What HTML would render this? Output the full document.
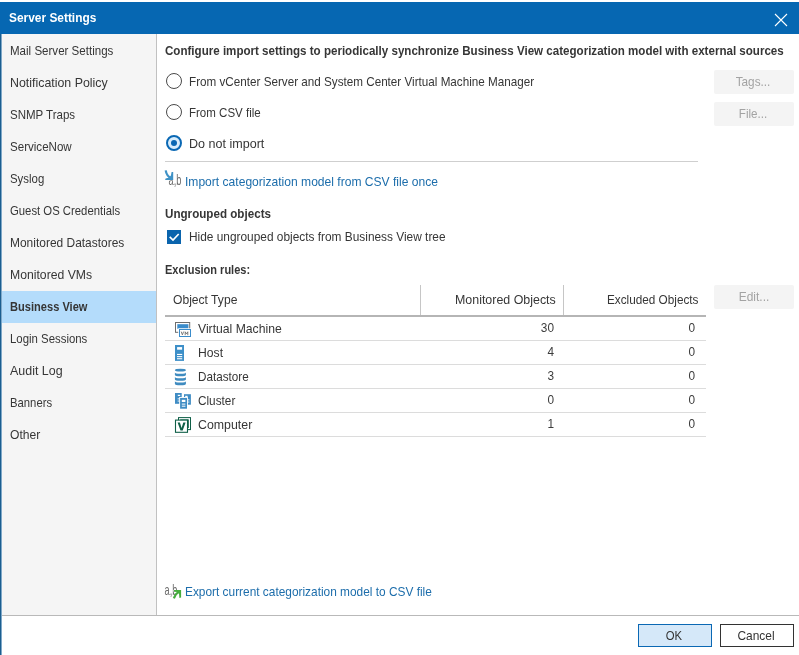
<!DOCTYPE html>
<html>
<head>
<meta charset="utf-8">
<title>Server Settings</title>
<style>
html,body{margin:0;padding:0;}
body{width:799px;height:655px;overflow:hidden;background:#fff;position:relative;
  font-family:"Liberation Sans",sans-serif;font-size:12.8px;color:#3c3c3c;}
.abs{position:absolute;}
svg{will-change:transform;}
.t{position:absolute;white-space:nowrap;line-height:16px;font-size:12.8px;transform-origin:0 0;}
.t.r{text-align:right;transform-origin:100% 0;}
.t.c{text-align:center;transform-origin:50% 0;}
.b{font-weight:bold;}
#titlebar{left:0;top:2px;width:799px;height:32px;background:#0667b2;}
#lborder{left:0;top:34px;width:2px;height:621px;background:linear-gradient(90deg,#1b5e90 0,#1b5e90 1px,#7fa8c8 1px,#7fa8c8 2px);}
#sidebar{left:2px;top:34px;width:154px;height:581px;background:#f5f5f5;}
#sideline{left:156px;top:34px;width:1px;height:581px;background:#c1c1c1;}
#sel{left:2px;top:291px;width:154px;height:32px;background:#b4dcfb;}
#botline{left:2px;top:615px;width:797px;height:1px;background:#b9b9b9;}
.dis{position:absolute;width:80px;height:24px;background:#f4f4f4;border-radius:2px;}
.radio{position:absolute;width:14px;height:14px;border:1px solid #4a4a4a;border-radius:50%;background:#fff;}
.hl{position:absolute;left:165px;width:541px;height:1px;background:#dcdcdc;}
</style>
</head>
<body>
<div class="abs" id="titlebar"></div>
<svg class="abs" id="closex" style="left:774px;top:13px" width="14" height="14" viewBox="0 0 14 14"><path d="M1 1 L13 13 M13 1 L1 13" stroke="#fff" stroke-width="1.1" fill="none"/></svg>
<div class="abs" id="lborder"></div>
<div class="abs" id="sidebar"></div>
<div class="abs" id="sideline"></div>
<div class="abs" id="sel"></div>
<div class="abs" id="botline"></div>

<div class="radio" style="left:166px;top:73px"></div>
<div class="radio" style="left:166px;top:104px"></div>
<div class="radio" id="rsel" style="left:166px;top:135px;border:2px solid #0a68b4;width:12px;height:12px;background:#d9edfc;"></div>
<div class="abs" style="left:171px;top:140px;width:6px;height:6px;border-radius:50%;background:#0a68b4;"></div>

<div class="dis" id="btags" style="left:714px;top:70px"></div>
<div class="dis" id="bfile" style="left:714px;top:102px"></div>
<div class="dis" id="bedit" style="left:714px;top:285px"></div>

<div class="abs" id="sep1" style="left:165px;top:161px;width:533px;height:1px;background:#cfcfcf;"></div>

<div class="abs" id="cb" style="left:167px;top:230px;width:14px;height:14px;background:#0a64ad;"></div>
<svg class="abs" style="left:167px;top:230px" width="14" height="14" viewBox="0 0 14 14"><path d="M2.7 6.9 L6.0 10.0 L11.7 4.0" stroke="#fff" stroke-width="1.7" fill="none"/></svg>

<div class="abs" style="left:420px;top:285px;width:1px;height:31px;background:#c6c6c6;"></div>
<div class="abs" style="left:563px;top:285px;width:1px;height:31px;background:#c6c6c6;"></div>
<div class="abs" id="hline" style="left:165px;top:315px;width:541px;height:2px;background:#b5b5b5;"></div>
<div class="hl" style="top:340px"></div>
<div class="hl" style="top:364px"></div>
<div class="hl" style="top:388px"></div>
<div class="hl" style="top:412px"></div>
<div class="hl" style="top:436px"></div>

<div class="abs" id="ok" style="left:638px;top:624px;width:72px;height:21px;border:1px solid #0a68b4;background:#d5e8f9;"></div>
<div class="abs" id="cancel" style="left:720px;top:624px;width:72px;height:21px;border:1px solid #333;background:#fff;"></div>

<!--ICONS_BEGIN-->
<svg class="abs" id="icons" style="left:0;top:0" width="799" height="655" viewBox="0 0 799 655">
<!-- import icon -->
<g id="ic-imp">
<text x="168.6" y="184.8" font-family="Liberation Sans, sans-serif" font-size="14.6" fill="#6a6a6a" textLength="12.8" lengthAdjust="spacingAndGlyphs">a,b</text>
<rect x="164" y="169" width="9.8" height="11.4" fill="#fff"/>
<path d="M165.7 170.4 C166.2 174.2 168.4 177 171.6 178.6" stroke="#3f92c6" stroke-width="2.2" fill="none"/>
<polygon points="173.2,172.1 173.2,179.9 165.1,179.9 165.6,178.6 169.3,177.6 170.9,175.6 171.6,172.1" fill="#3f92c6"/>
</g>
<!-- export icon -->
<g id="ic-exp">
<text x="164.6" y="594.7" font-family="Liberation Sans, sans-serif" font-size="14.6" fill="#6a6a6a" textLength="12.8" lengthAdjust="spacingAndGlyphs">a,b</text>
<path d="M173.2 590.2 h8.2 v7.2 l-1.6 0.9 l-0.9 -4.2 l-4.4 -1.2 z" fill="#fff"/>
<path d="M173.9 598.3 C175 595.2 177 592.8 179.6 591.4" stroke="#46ad3e" stroke-width="2.1" fill="none"/>
<polygon points="174,589.9 181.1,589.9 181.1,597.6 179.4,597.9 179,593.6 177.6,592 174,591.7" fill="#46ad3e"/>
</g>
<!-- VM icon -->
<g id="ic-vm">
<rect x="175.5" y="322.5" width="14.2" height="9.8" fill="#fff" stroke="#6d6d6d" stroke-width="1"/>
<rect x="177.3" y="324.2" width="11.1" height="4.6" fill="#3a8ccb"/>
<rect x="178.2" y="328.3" width="13.4" height="9.2" fill="#fff"/>
<rect x="179.5" y="329.5" width="11" height="7" fill="#fff" stroke="#3a8ccb" stroke-width="1"/>
<path d="M181.2 331.6 l1.2 3.3 l1.2 -3.3 M185.2 335.2 v-3.4 l1.3 2.2 l1.3 -2.2 v3.4" stroke="#707070" stroke-width="0.9" fill="none"/>
</g>
<!-- Host icon -->
<g id="ic-host">
<rect x="175" y="345" width="9" height="15.9" fill="#3d8fc8"/>
<rect x="177.1" y="347.1" width="5" height="2.6" fill="#fff"/>
<rect x="177" y="353.9" width="5.2" height="1.1" fill="#fff"/>
<rect x="177" y="356.1" width="5.2" height="1.1" fill="#fff"/>
<rect x="177" y="358.2" width="5.2" height="1.1" fill="#fff"/>
</g>
<!-- Datastore icon -->
<g id="ic-ds" fill="#3f8bc0">
<ellipse cx="180.4" cy="370.2" rx="5.5" ry="1.4"/>
<path d="M174.9 372.4 a5.5 1.3 0 0 0 11 0 v2.6 a5.5 1.3 0 0 1 -11 0 z"/>
<path d="M174.9 376.9 a5.5 1.3 0 0 0 11 0 v2.6 a5.5 1.3 0 0 1 -11 0 z"/>
<path d="M174.9 381.3 a5.5 1.3 0 0 0 11 0 v2.6 a5.5 1.3 0 0 1 -11 0 z"/>
</g>
<!-- Cluster icon -->
<g id="ic-cl">
<rect x="175" y="393" width="6.7" height="10.8" fill="#3f8cc4"/>
<rect x="177.8" y="394.8" width="2.4" height="1.2" fill="#fff"/>
<rect x="177.6" y="398.4" width="2" height="0.9" fill="#fff"/>
<rect x="177.6" y="400.6" width="2" height="0.9" fill="#fff"/>
<rect x="184" y="394.2" width="6.9" height="10.5" fill="#3f8cc4"/>
<rect x="185.2" y="395.8" width="2.4" height="1.2" fill="#fff"/>
<rect x="187.6" y="399.4" width="1.8" height="0.9" fill="#fff"/>
<rect x="187.6" y="401.6" width="1.8" height="0.9" fill="#fff"/>
<rect x="179.2" y="397" width="8.7" height="12.6" fill="#fff"/>
<rect x="180.1" y="397.9" width="6.9" height="10.8" fill="#3f8cc4"/>
<rect x="181.8" y="399.8" width="3.6" height="2.2" fill="#fff"/>
<rect x="181.8" y="403.6" width="3.6" height="1" fill="#fff"/>
<rect x="181.8" y="405.7" width="3.6" height="1" fill="#fff"/>
</g>
<!-- Computer icon -->
<g id="ic-pc">
<rect x="178.5" y="417.6" width="12" height="12" fill="#fff" stroke="#0f5f47" stroke-width="1"/>
<rect x="180.2" y="419.4" width="8.6" height="8.6" fill="#0f5f47"/>
<rect x="175.5" y="420.1" width="12" height="12.2" fill="#fff" stroke="#0f5f47" stroke-width="1.1"/>
<path d="M177.6 422.4 h2.3 l1.7 5.6 l1.7 -5.6 h2.3 l-2.9 8.2 h-2.2 z" fill="#0f5f47"/>
</g>
</svg>
<!--ICONS_END-->

<div id="txtlayer" style="position:absolute;left:0;top:0;width:799px;height:655px;will-change:transform;">
<div class="t b" id="title" style="left:9.1px;top:10.4px;color:#fff;transform:scaleX(0.9304)">Server Settings</div>
<div class="t" id="n0" style="left:9.9px;top:43.1px;color:#363636;transform:scaleX(0.9027)">Mail Server Settings</div>
<div class="t" id="n1" style="left:9.9px;top:75.1px;color:#363636;transform:scaleX(0.9677)">Notification Policy</div>
<div class="t" id="n2" style="left:9.9px;top:107.1px;color:#363636;transform:scaleX(0.9007)">SNMP Traps</div>
<div class="t" id="n3" style="left:9.9px;top:139.1px;color:#363636;transform:scaleX(0.9041)">ServiceNow</div>
<div class="t" id="n4" style="left:9.9px;top:171.1px;color:#363636;transform:scaleX(0.8916)">Syslog</div>
<div class="t" id="n5" style="left:9.9px;top:203.1px;color:#363636;transform:scaleX(0.8850)">Guest OS Credentials</div>
<div class="t" id="n6" style="left:9.9px;top:235.1px;color:#363636;transform:scaleX(0.9345)">Monitored Datastores</div>
<div class="t" id="n7" style="left:9.9px;top:267.1px;color:#363636;transform:scaleX(0.9538)">Monitored VMs</div>
<div class="t b" id="n8" style="left:9.9px;top:299.1px;color:#363636;transform:scaleX(0.8664)">Business View</div>
<div class="t" id="n9" style="left:9.9px;top:331.1px;color:#363636;transform:scaleX(0.8904)">Login Sessions</div>
<div class="t" id="n10" style="left:9.9px;top:363.1px;color:#363636;transform:scaleX(0.9718)">Audit Log</div>
<div class="t" id="n11" style="left:9.9px;top:395.1px;color:#363636;transform:scaleX(0.8828)">Banners</div>
<div class="t" id="n12" style="left:9.9px;top:427.1px;color:#363636;transform:scaleX(0.9461)">Other</div>
<div class="t b" id="head" style="left:164.8px;top:42.9px;color:#363636;transform:scaleX(0.9048)">Configure import settings to periodically synchronize Business View categorization model with external sources</div>
<div class="t" id="r1" style="left:189.2px;top:73.6px;color:#363636;transform:scaleX(0.9127)">From vCenter Server and System Center Virtual Machine Manager</div>
<div class="t" id="r2" style="left:189.2px;top:104.6px;color:#363636;transform:scaleX(0.9002)">From CSV file</div>
<div class="t" id="r3" style="left:189.2px;top:135.6px;color:#363636;transform:scaleX(0.9803)">Do not import</div>
<div class="t" id="imp" style="left:185.2px;top:174.3px;color:#1c6dab;transform:scaleX(0.9433)">Import categorization model from CSV file once</div>
<div class="t b" id="ung" style="left:164.8px;top:206.1px;color:#363636;transform:scaleX(0.9090)">Ungrouped objects</div>
<div class="t" id="hide" style="left:189.2px;top:229.3px;color:#363636;transform:scaleX(0.9280)">Hide ungrouped objects from Business View tree</div>
<div class="t b" id="excl" style="left:164.8px;top:262.1px;color:#363636;transform:scaleX(0.8609)">Exclusion rules:</div>
<div class="t" id="h1" style="left:172.9px;top:292.3px;color:#363636;transform:scaleX(0.9457)">Object Type</div>
<div class="t" id="h2" style="left:455.0px;top:292.3px;color:#363636;transform:scaleX(0.9703)">Monitored Objects</div>
<div class="t" id="h3" style="left:606.5px;top:292.3px;color:#363636;transform:scaleX(0.9185)">Excluded Objects</div>
<div class="t" id="c1" style="left:198.0px;top:320.6px;color:#363636;transform:scaleX(0.9517)">Virtual Machine</div>
<div class="t" id="c2" style="left:198.0px;top:344.6px;color:#363636;transform:scaleX(0.9506)">Host</div>
<div class="t" id="c3" style="left:198.0px;top:368.6px;color:#363636;transform:scaleX(0.9129)">Datastore</div>
<div class="t" id="c4" style="left:198.0px;top:392.6px;color:#363636;transform:scaleX(0.9203)">Cluster</div>
<div class="t" id="c5" style="left:198.0px;top:416.6px;color:#363636;transform:scaleX(0.9658)">Computer</div>
<div class="t" id="exp" style="left:184.5px;top:584.2px;color:#1c6dab;transform:scaleX(0.9279)">Export current categorization model to CSV file</div>
<div class="t r" id="m1" style="left:494.3px;width:60px;top:319.8px;transform:scaleX(0.9236)">30</div>
<div class="t r" id="m2" style="left:494.3px;width:60px;top:343.8px;transform:scaleX(0.9236)">4</div>
<div class="t r" id="m3" style="left:494.3px;width:60px;top:367.8px;transform:scaleX(0.9236)">3</div>
<div class="t r" id="m4" style="left:494.3px;width:60px;top:391.8px;transform:scaleX(0.9236)">0</div>
<div class="t r" id="m5" style="left:494.3px;width:60px;top:415.8px;transform:scaleX(0.9236)">1</div>
<div class="t r" id="e1" style="left:635.2px;width:60px;top:319.8px;transform:scaleX(0.9236)">0</div>
<div class="t r" id="e2" style="left:635.2px;width:60px;top:343.8px;transform:scaleX(0.9236)">0</div>
<div class="t r" id="e3" style="left:635.2px;width:60px;top:367.8px;transform:scaleX(0.9236)">0</div>
<div class="t r" id="e4" style="left:635.2px;width:60px;top:391.8px;transform:scaleX(0.9236)">0</div>
<div class="t r" id="e5" style="left:635.2px;width:60px;top:415.8px;transform:scaleX(0.9236)">0</div>
<div class="t c" id="ttags" style="left:713.2px;width:80px;top:73.8px;color:#a3a3a3;transform:scaleX(0.9182)">Tags...</div>
<div class="t c" id="tfile" style="left:713.2px;width:80px;top:105.8px;color:#a3a3a3;transform:scaleX(0.9079)">File...</div>
<div class="t c" id="tedit" style="left:713.5px;width:80px;top:288.8px;color:#a3a3a3;transform:scaleX(0.9336)">Edit...</div>
<div class="t c" id="tok" style="left:634.0px;width:80px;top:627.8px;color:#333;transform:scaleX(0.8852)">OK</div>
<div class="t c" id="tcancel" style="left:716.2px;width:80px;top:627.8px;color:#333;transform:scaleX(0.9313)">Cancel</div>
</div>
</body>
</html>
